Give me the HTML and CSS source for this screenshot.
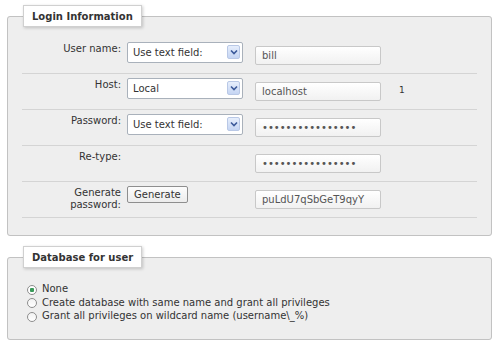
FILE: index.html
```html
<!DOCTYPE html>
<html lang="en">
    <head>
        <meta charset="UTF-8" />
        <meta name="viewport" content="width=device-width, initial-scale=1.0" />
        <title>Add user</title>

        <link rel="stylesheet" href="styles.css">
    </head>

    <body>
        <div class="page">
            <fieldset class="box">
                <legend>Login Information</legend>

                <div class="row">
                    <label class="label" for="user-type">User name:</label>
                    <div class="choice">
                        <select id="user-type"><option>Use text field:</option></select>
                        <span class="arrow"><svg viewBox="0 0 8 6" width="8" height="6"><path d="M1 1.5l3 3 3-3" fill="none" stroke="#3c5a9a" stroke-width="1.6" /></svg></span>
                    </div>
                    <input class="field" type="text" value="bill" />
                </div>

                <div class="row">
                    <label class="label" for="host-type">Host:</label>
                    <div class="choice">
                        <select id="host-type"><option>Local</option></select>
                        <span class="arrow"><svg viewBox="0 0 8 6" width="8" height="6"><path d="M1 1.5l3 3 3-3" fill="none" stroke="#3c5a9a" stroke-width="1.6" /></svg></span>
                    </div>
                    <input class="field" type="text" value="localhost" />
                    <span class="note">1</span>
                </div>

                <div class="row">
                    <label class="label" for="pass-type">Password:</label>
                    <div class="choice">
                        <select id="pass-type"><option>Use text field:</option></select>
                        <span class="arrow"><svg viewBox="0 0 8 6" width="8" height="6"><path d="M1 1.5l3 3 3-3" fill="none" stroke="#3c5a9a" stroke-width="1.6" /></svg></span>
                    </div>
                    <input class="field" type="password" value="abcdefghijklmnop" />
                </div>

                <div class="row">
                    <label class="label" for="retype">Re-type:</label>
                    <span></span>
                    <input class="field" id="retype" type="password" value="abcdefghijklmnop" />
                </div>

                <div class="row">
                    <label class="label" for="generated">Generate<br />password:</label>
                    <div><button type="button">Generate</button></div>
                    <input class="field" id="generated" type="text" value="puLdU7qSbGeT9qyY" />
                </div>
            </fieldset>

            <fieldset class="box db">
                <legend>Database for user</legend>

                <label class="option"><input type="radio" name="db" checked /> None</label>
                <label class="option"><input type="radio" name="db" /> Create database with same name and grant all privileges</label>
                <label class="option"><input type="radio" name="db" /> Grant all privileges on wildcard name (username\_%)</label>
            </fieldset>
        </div>
    </body>
</html>
```

FILE: styles.css
```css
* {
    margin: 0;
    padding: 0;
    box-sizing: border-box;
}

body {
    background-color: #fff;
    color: #333;
    font-family: "DejaVu Sans", Verdana, sans-serif;
    font-size: 10px;
}

.page {
    padding: 5px 8px 0 7px;
}

.box {
    background-color: #eeeeee;
    border: 1px solid #c2c2c2;
    border-radius: 3px;
    padding: 11px 14px 17px 14px;
}

.box legend {
    margin-left: 1px;
    padding: 0 8px;
    height: 22px;
    line-height: 21px;
    background-color: #fff;
    border: 1px solid #d0d0d0;
    box-shadow: 1px 1px 3px rgba(0, 0, 0, 0.2);
    font-size: 10px;
    font-weight: bold;
    color: #333;
}

.row {
    display: grid;
    grid-template-columns: 105px 128px 135px auto;
    align-items: start;
    height: 36px;
    padding-top: 4px;
    border-bottom: 1px solid #d4d4d4;
}

.label {
    padding-right: 6px;
    text-align: right;
    line-height: 12px;
    margin-top: 1px;
}

.choice {
    position: relative;
    width: 116px;
}

select {
    appearance: none;
    width: 116px;
    height: 21px;
    padding-left: 5px;
    border: 1px solid #a9b1bb;
    border-radius: 2px;
    background-color: #fff;
    color: #333;
    font: inherit;
}

.arrow {
    position: absolute;
    top: 3px;
    right: 3px;
    width: 13px;
    height: 14px;
    display: flex;
    align-items: center;
    justify-content: center;
    border: 1px solid #b9c8e6;
    border-radius: 2px;
    background: linear-gradient(#e6eefc, #c5d5f3);
}

.field {
    width: 126px;
    height: 19px;
    margin-top: 4px;
    padding: 0 6px;
    border: 1px solid #c8c8c8;
    border-radius: 2px;
    background: linear-gradient(#fff, #f1f1f1);
    color: #555;
    font: inherit;
}

.note {
    margin: 7px 0 0 9px;
    font-size: 9px;
}

button {
    height: 17px;
    padding: 0 6px;
    border: 1px solid #8e8e8e;
    border-radius: 2px;
    background: linear-gradient(#fcfcfc, #ececec);
    color: #333;
    font: inherit;
}

.db {
    margin-top: 10px;
    padding: 14px 14px 16px 19px;
}

.db legend {
    margin-left: -4px;
}

.option {
    display: flex;
    align-items: center;
    height: 13.5px;
}

.option input {
    appearance: none;
    width: 10px;
    height: 10px;
    margin: 2px 5px 0 0;
    border: 1px solid #8d8d8d;
    border-radius: 50%;
    background: linear-gradient(#f2f2f2, #fff);
}

.option input:checked {
    background: radial-gradient(circle, #3a9a5a 0 2px, #fff 2.5px);
}
```
